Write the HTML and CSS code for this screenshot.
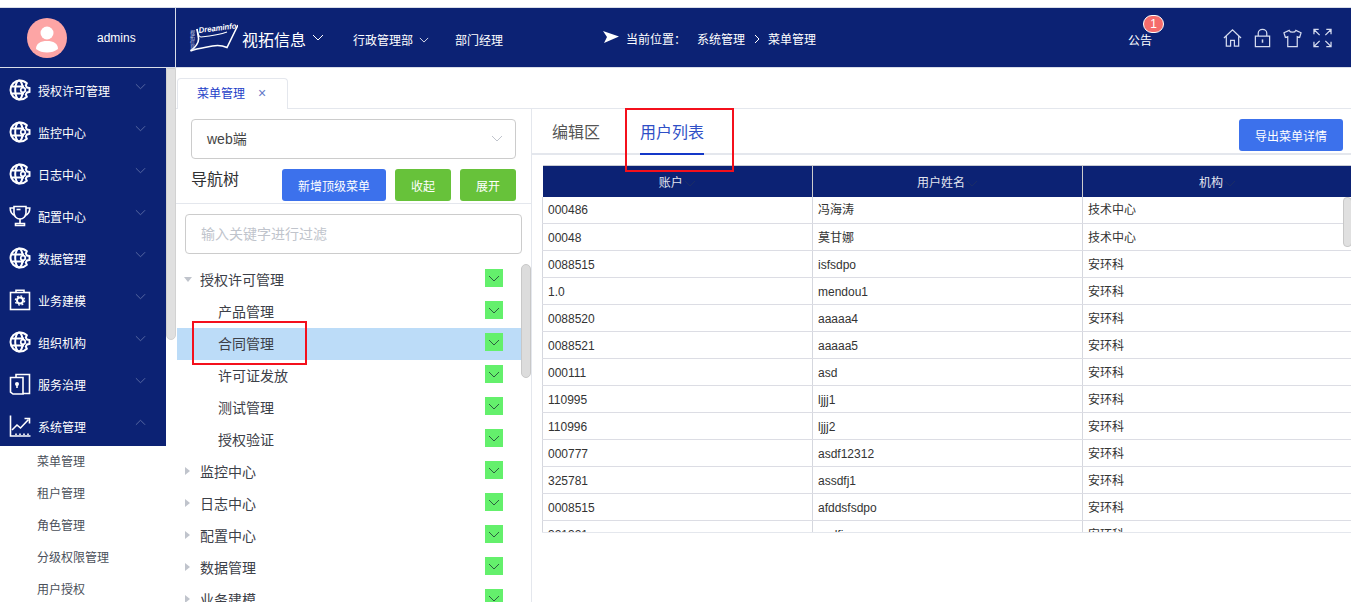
FILE: index.html
```html
<!DOCTYPE html>
<html lang="zh">
<head>
<meta charset="utf-8">
<title>菜单管理</title>
<link rel="stylesheet" href="styles.css">
</head>
<body>
<svg class="defs" width="0" height="0">
  <defs>
    <symbol id="i-globe" viewBox="0 0 22 22">
      <g fill="none" stroke="#fff" stroke-width="2">
        <path d="M11 1.500a9.500 9.500 0 0 0 0 19"/>
        <path d="M11 1.500c2.500 0 5 1 6.800 2.800l-1 2.200 1.200 2 2.500.5v4l-2.500.5-1.200 2 1 2.200a9.500 9.500 0 0 1-6.800 2.800"/>
        <ellipse cx="10" cy="11" rx="3.800" ry="9.500"/>
        <path d="M2 7.500h13M2 14.500h13"/>
      </g>
      <circle cx="14" cy="11" r="2.300" fill="#0c2274" stroke="#fff" stroke-width="1.700"/>
    </symbol>
    <symbol id="i-trophy" viewBox="0 0 22 22">
      <g fill="none" stroke="#fff" stroke-width="1.600">
        <path d="M5 1.500h12v6.500a6 6 0 0 1-12 0z"/>
        <path d="M5 3H1.200c0 4 1.300 6.500 5 7.500M17 3h3.800c0 4-1.300 6.500-5 7.500"/>
        <path d="M11 14v4.500M6.500 20.500h9v-2h-9z"/>
        <path d="M7.500 4.500h4"/>
      </g>
    </symbol>
    <symbol id="i-case" viewBox="0 0 22 22">
      <g fill="none" stroke="#fff" stroke-width="1.600">
        <rect x="1.500" y="3.500" width="19" height="17"/>
        <path d="M7 3.500V1.200h8v2.300"/>
      </g>
      <circle cx="11" cy="11.500" r="3" fill="none" stroke="#fff" stroke-width="2"/>
      <circle cx="11" cy="11.500" r="4.600" fill="none" stroke="#fff" stroke-width="1.400" stroke-dasharray="1.800 1.800"/>
    </symbol>
    <symbol id="i-cards" viewBox="0 0 22 22">
      <g fill="none" stroke="#fff" stroke-width="1.600">
        <path d="M7 4.500V1.500h13.500v19H14"/>
        <path d="M1.500 4.500H14v16.500H4l-2.500-2z"/>
      </g>
      <circle cx="8" cy="11" r="2" fill="#fff"/>
      <path d="M7.200 12h1.600v3H7.200z" fill="#fff"/>
    </symbol>
    <symbol id="i-chart" viewBox="0 0 22 22">
      <g fill="none" stroke="#fff" stroke-width="1.600">
        <path d="M1.500 0.500v20.500h20M7 20v-1.500M11 20v-1.500M15 20v-1.500M19 20v-1.500"/>
        <path d="M3 15l5-5 3.500 3L19.500 4.500"/>
        <path d="M15.500 3.500h5v5"/>
      </g>
    </symbol>
    <symbol id="i-down" viewBox="0 0 12 7">
      <path d="M1 1l5 5 5-5" fill="none" stroke="currentColor" stroke-width="1"/>
    </symbol>
  </defs>
</svg>

<div class="topline"></div>
<header class="header">
  <div class="user">
    <svg class="avatar" viewBox="0 0 40 40">
      <circle cx="20" cy="20" r="20" fill="#fda5a5"/>
      <circle cx="20" cy="15" r="6.500" fill="#fff"/>
      <path d="M9 31c0-5.500 4.500-8 11-8s11 2.500 11 8c-3 2.500-7 3.500-11 3.500S12 33.500 9 31z" fill="#fff"/>
    </svg>
    <span class="user-name">admins</span>
  </div>
  <div class="brand">
    <svg class="logo" viewBox="0 0 50 34">
      <path d="M9 9l1.500 9c.5 4-1.500 8-8 13 7-3 15-3.500 22-5 5-1 10-.5 14.500 1.500L50 5" fill="none" stroke="#fff" stroke-width="1.600"/>
      <path d="M9 9c1 6 2 8 4 8 9-1 18-2 26-5" fill="none" stroke="#fff" stroke-width="1.200"/>
      <text class="logo-text" x="11" y="13" textLength="38" lengthAdjust="spacingAndGlyphs" transform="rotate(-7 11 13)">Dreaminfo</text>
      <text class="logo-side" x="4" y="10">视拓信息</text>
    </svg>
    <span class="brand-name">视拓信息</span>
    <svg class="chev-brand"><use href="#i-down"/></svg>
  </div>
  <nav class="org">
    <span>行政管理部</span>
    <svg class="chev-org"><use href="#i-down"/></svg>
    <span class="org-role">部门经理</span>
  </nav>
  <div class="crumbs">
    <svg class="plane" viewBox="0 0 16 12"><path d="M0 0l16 5.500L1 12l3-6z" fill="#fff"/></svg>
    <span class="crumb-label">当前位置：</span>
    <span>系统管理</span>
    <svg class="crumb-sep" viewBox="0 0 6 10"><path d="M1 1l4 4-4 4" fill="none" stroke="#fff"/></svg>
    <span>菜单管理</span>
  </div>
  <div class="notice">公告<span class="badge">1</span></div>
  <div class="tools">
    <svg class="tool" viewBox="0 0 20 20"><path d="M1 10L10 1.500 19 10M3.500 8v10.500h4.500v-6h4v6h4.500V8" fill="none" stroke="#d5dbef" stroke-width="1.300"/></svg>
    <svg class="tool" viewBox="0 0 20 20"><path d="M5.500 8V5a4.500 4 0 0 1 9 0v3M2.500 8h15v11h-15z" fill="none" stroke="#d5dbef" stroke-width="1.300"/><path d="M9.200 11.500h1.600v3.500H9.200z" fill="#d5dbef"/></svg>
    <svg class="tool" viewBox="0 0 20 20"><path d="M6.500 2C7.500 4.500 12.500 4.500 13.500 2L19 4.500l-1.500 5-2.500-1v10.500H5V8.500l-2.500 1L1 4.500z" fill="none" stroke="#d5dbef" stroke-width="1.300"/></svg>
    <svg class="tool" viewBox="0 0 20 20"><path d="M1 6V1h5M1 1l6 6M19 6V1h-5M19 1l-6 6M1 14v5h5M1 19l6-6M19 14v5h-5M19 19l-6-6" fill="none" stroke="#d5dbef" stroke-width="1.300"/></svg>
  </div>
</header>

<div class="main">
  <aside class="sidebar">
    <div class="side-scroll">
      <ul class="side-menu">
        <li class="side-item"><svg class="side-icon"><use href="#i-globe"/></svg><span>授权许可管理</span><svg class="side-chev"><use href="#i-down"/></svg></li>
        <li class="side-item"><svg class="side-icon"><use href="#i-globe"/></svg><span>监控中心</span><svg class="side-chev"><use href="#i-down"/></svg></li>
        <li class="side-item"><svg class="side-icon"><use href="#i-globe"/></svg><span>日志中心</span><svg class="side-chev"><use href="#i-down"/></svg></li>
        <li class="side-item"><svg class="side-icon"><use href="#i-trophy"/></svg><span>配置中心</span><svg class="side-chev"><use href="#i-down"/></svg></li>
        <li class="side-item"><svg class="side-icon"><use href="#i-globe"/></svg><span>数据管理</span><svg class="side-chev"><use href="#i-down"/></svg></li>
        <li class="side-item"><svg class="side-icon"><use href="#i-case"/></svg><span>业务建模</span><svg class="side-chev"><use href="#i-down"/></svg></li>
        <li class="side-item"><svg class="side-icon"><use href="#i-globe"/></svg><span>组织机构</span><svg class="side-chev"><use href="#i-down"/></svg></li>
        <li class="side-item"><svg class="side-icon"><use href="#i-cards"/></svg><span>服务治理</span><svg class="side-chev"><use href="#i-down"/></svg></li>
        <li class="side-item"><svg class="side-icon"><use href="#i-chart"/></svg><span>系统管理</span><svg class="side-chev side-chev-up"><use href="#i-down"/></svg></li>
      </ul>
      <ul class="side-sub">
        <li>菜单管理</li>
        <li>租户管理</li>
        <li>角色管理</li>
        <li>分级权限管理</li>
        <li>用户授权</li>
      </ul>
    </div>
    <div class="side-bar"><div class="side-thumb"></div></div>
  </aside>

  <section class="content">
    <div class="tabbar">
      <div class="tab">菜单管理<span class="tab-x">×</span></div>
    </div>
    <div class="panes">
      <div class="left">
        <div class="select"><span>web端</span><svg class="select-chev"><use href="#i-down"/></svg></div>
        <div class="tree-head">
          <span class="tree-title">导航树</span>
          <button class="btn btn-blue btn-new">新增顶级菜单</button>
          <button class="btn btn-green">收起</button>
          <button class="btn btn-green">展开</button>
        </div>
        <div class="filter">输入关键字进行过滤</div>
        <div class="tree-wrap">
          <ul class="tree">
            <li class="node"><i class="caret caret-open"></i><span>授权许可管理</span><b class="check"><svg><use href="#i-down"/></svg></b></li>
            <li class="node node-child"><span>产品管理</span><b class="check"><svg><use href="#i-down"/></svg></b></li>
            <li class="node node-child node-current"><span>合同管理</span><b class="check"><svg><use href="#i-down"/></svg></b></li>
            <li class="node node-child"><span>许可证发放</span><b class="check"><svg><use href="#i-down"/></svg></b></li>
            <li class="node node-child"><span>测试管理</span><b class="check"><svg><use href="#i-down"/></svg></b></li>
            <li class="node node-child"><span>授权验证</span><b class="check"><svg><use href="#i-down"/></svg></b></li>
            <li class="node"><i class="caret"></i><span>监控中心</span><b class="check"><svg><use href="#i-down"/></svg></b></li>
            <li class="node"><i class="caret"></i><span>日志中心</span><b class="check"><svg><use href="#i-down"/></svg></b></li>
            <li class="node"><i class="caret"></i><span>配置中心</span><b class="check"><svg><use href="#i-down"/></svg></b></li>
            <li class="node"><i class="caret"></i><span>数据管理</span><b class="check"><svg><use href="#i-down"/></svg></b></li>
            <li class="node"><i class="caret"></i><span>业务建模</span><b class="check"><svg><use href="#i-down"/></svg></b></li>
          </ul>
          <div class="tree-thumb"></div>
        </div>
      </div>
      <div class="right">
        <div class="right-head">
          <div class="rtab">编辑区</div>
          <div class="rtab rtab-active">用户列表</div>
          <button class="btn btn-blue btn-export">导出菜单详情</button>
        </div>
        <div class="table-wrap">
          <table class="table">
            <thead>
              <tr>
                <th>账户<svg class="th-chev"><use href="#i-down"/></svg></th>
                <th>用户姓名<svg class="th-chev"><use href="#i-down"/></svg></th>
                <th>机构<svg class="th-chev"><use href="#i-down"/></svg></th>
              </tr>
            </thead>
            <tbody>
              <tr><td>000486</td><td>冯海涛</td><td>技术中心</td></tr>
              <tr><td>00048</td><td>莫甘娜</td><td>技术中心</td></tr>
              <tr><td>0088515</td><td>isfsdpo</td><td>安环科</td></tr>
              <tr><td>1.0</td><td>mendou1</td><td>安环科</td></tr>
              <tr><td>0088520</td><td>aaaaa4</td><td>安环科</td></tr>
              <tr><td>0088521</td><td>aaaaa5</td><td>安环科</td></tr>
              <tr><td>000111</td><td>asd</td><td>安环科</td></tr>
              <tr><td>110995</td><td>ljjj1</td><td>安环科</td></tr>
              <tr><td>110996</td><td>ljjj2</td><td>安环科</td></tr>
              <tr><td>000777</td><td>asdf12312</td><td>安环科</td></tr>
              <tr><td>325781</td><td>assdfj1</td><td>安环科</td></tr>
              <tr><td>0008515</td><td>afddsfsdpo</td><td>安环科</td></tr>
              <tr><td>321321</td><td>asdfj</td><td>安环科</td></tr>
            </tbody>
          </table>
          <div class="table-thumb"></div>
        </div>
      </div>
    </div>
  </section>
</div>
<div class="redbox redbox-tab"></div>
<div class="redbox redbox-node"></div>
</body>
</html>
```
FILE: styles.css
```css
* { box-sizing: border-box; }
html, body { margin: 0; padding: 0; height: 602px; overflow: hidden; background: #fff; }
body {
  position: relative;
  font-family: "Liberation Sans", "Noto Sans CJK SC", sans-serif;
  font-size: 12px;
  color: #303133;
}
ul { list-style: none; margin: 0; padding: 0; }
button { font-family: inherit; border: 0; padding: 0; }
.defs { position: absolute; }

.topline { height: 8px; border-bottom: 1px solid #d9dde8; }
.header {
  height: 60px;
  background: #0c2274;
  border-bottom: 1px solid #d9dde8;
  display: flex;
  align-items: center;
  color: #fff;
}
.user {
  width: 176px;
  height: 100%;
  border-right: 1px solid #d9dde8;
  display: flex;
  align-items: center;
  padding-left: 27px;
}
.avatar { width: 40px; height: 40px; }
.user-name { margin-left: 30px; font-size: 12px; margin-top: 1px; }
.brand { width: 177px; display: flex; align-items: center; padding-left: 12px; }
.logo { width: 50px; height: 34px; flex: none; margin-top: -2px; }
.logo-text { font: italic bold 8px "Liberation Sans", sans-serif; fill: #fff; }
.logo-side { font-size: 5px; fill: #c9d0e8; writing-mode: vertical-rl; }
.brand-name { font-size: 16px; margin: 2px 0 0 4px; white-space: nowrap; }
.chev-brand { width: 12px; height: 7px; margin-left: 6px; color: #fff; flex: none; }
.org { display: flex; align-items: center; width: 250px; margin-top: 4px; }
.chev-org { width: 10px; height: 6px; margin-left: 6px; color: #fff; }
.org-role { margin-left: 26px; }
.crumbs { display: flex; align-items: center; width: 525px; margin-top: 2px; }
.plane { width: 16px; height: 12px; margin-top: -3px; }
.crumb-label { margin-left: 7px; width: 71px; }
.crumb-sep { width: 6px; height: 10px; margin: 0 8px 0 9px; }
.notice { position: relative; width: 95px; margin-top: 4px; }
.badge {
  position: absolute;
  left: 15px;
  top: -16px;
  width: 21px;
  height: 18px;
  background: #f56c6c;
  border: 1px solid #fff;
  border-radius: 10px;
  font-size: 12px;
  line-height: 16px;
  text-align: center;
}
.tools { display: flex; gap: 11px; }
.tool { width: 19px; height: 20px; }

.main { display: flex; height: 534px; }
.sidebar { width: 176px; display: flex; flex: none; height: 534px; overflow: hidden; }
.side-scroll { width: 166px; }
.side-menu { background: #0c2274; padding-top: 1px; height: 378px; }
.side-item {
  height: 42px;
  display: flex;
  align-items: center;
  color: #fff;
  padding-left: 9px;
  position: relative;
}
.side-icon { width: 22px; height: 22px; flex: none; margin-right: 7px; }
.side-chev { width: 11px; height: 7px; color: #5d6da5; position: absolute; left: 135px; top: 14px; }
.side-chev-up { transform: rotate(180deg); }
.side-sub li { height: 32px; line-height: 32px; padding-left: 37px; color: #4a4f5a; }
.side-bar { width: 10px; background: #fff; }
.side-thumb { height: 272px; width: 10px; background: #e0e0e0; border: 1px solid #d2d2d2; border-radius: 0 0 5px 5px; }

.content { flex: 1; min-width: 0; display: flex; flex-direction: column; }
.tabbar { height: 41px; padding-top: 10px; padding-left: 1px; border-bottom: 1px solid #e4e7ed; }
.tab {
  width: 111px;
  height: 31px;
  border: 1px solid #e4e7ed;
  border-bottom: 0;
  border-radius: 4px 4px 0 0;
  background: #fff;
  color: #1e40c8;
  line-height: 29px;
  padding-left: 19px;
}
.tab-x { margin-left: 13px; color: #6478c8; font-size: 14px; }
.panes { display: flex; flex: 1; min-height: 0; }

.left { width: 356px; border-right: 1px solid #e4e7ed; flex: none; overflow: hidden; }
.select {
  margin: 10px 0 0 15px;
  width: 325px;
  height: 40px;
  border: 1px solid #ccc;
  border-radius: 4px;
  display: flex;
  align-items: center;
  justify-content: space-between;
  padding: 0 12px 2px 15px;
  font-size: 14px;
  color: #444;
}
.select-chev { width: 12px; height: 7px; color: #c0c4cc; }
.tree-head {
  height: 35px;
  margin-top: 10px;
  padding: 0 15px;
  display: flex;
  align-items: flex-start;
  gap: 9px;
  border-bottom: 1px solid #e4e7ed;
}
.tree-title { font-size: 16px; color: #303133; width: 82px; line-height: 22px; }
.btn { height: 32px; border-radius: 3px; color: #fff; font-size: 12px; cursor: pointer; }
.btn-blue { background: #3c71ec; }
.btn-green { background: #67c23a; width: 56px; }
.btn-new { width: 104px; }
.filter {
  margin: 10px 0 0 9px;
  width: 337px;
  height: 40px;
  border: 1px solid #ccc;
  border-radius: 4px;
  color: #c0c4cc;
  line-height: 38px;
  padding-left: 15px;
  font-size: 14px;
}
.tree-wrap { position: relative; margin-top: 10px; height: 338px; overflow: hidden; }
.tree { padding: 0 0 0 1px; width: 346px; }
.node {
  height: 32px;
  display: flex;
  align-items: center;
  padding-left: 8px;
  padding-bottom: 2px;
  position: relative;
  font-size: 14px;
  color: #3c4048;
}
.node-child { padding-left: 41px; }
.node-current { background: #bcdcf8; }
.caret {
  width: 0; height: 0;
  border-style: solid;
  border-width: 4px 0 4px 5px;
  border-color: transparent transparent transparent #c0c4cc;
  margin-right: 10px;
}
.caret-open { border-width: 5px 4px 0 4px; border-color: #c0c4cc transparent transparent transparent; margin-right: 8px; margin-left: -1px; }
.check {
  position: absolute;
  left: 308px;
  top: 5px;
  width: 18px;
  height: 18px;
  background: #64f06c;
  display: flex;
  align-items: center;
  justify-content: center;
  color: #2c5f40;
}
.check svg { width: 12px; height: 7px; }
.tree-thumb {
  position: absolute;
  left: 345px;
  top: 0;
  width: 10px;
  height: 114px;
  background: #dcdcdc;
  border: 1px solid #c8c8c8;
  border-radius: 5px;
}

.right { flex: 1; min-width: 0; }
.right-head {
  height: 46px;
  display: flex;
  border-bottom: 2px solid #e4e7ed;
  padding-left: 20px;
  position: relative;
}
.rtab {
  font-size: 16px;
  color: #555;
  line-height: 48px;
  height: 46px;
  margin-right: 40px;
}
.rtab-active { color: #2f4fc6; border-bottom: 2px solid #1438c8; }
.btn-export { position: absolute; left: 707px; top: 10px; width: 104px; }
.table-wrap {
  position: relative;
  margin: 10px 0 0 10px;
  height: 368px;
  overflow: hidden;
  border-bottom: 1px solid #e4e7ed;
}
.table { width: 811px; border-collapse: collapse; table-layout: fixed; font-size: 12px; border-top: 1px solid #c9ccd4; color: #333; }
.table th {
  background: #0c2274;
  height: 31px;
  color: #e2e5f0;
  font-weight: 400;
  border-right: 1px solid #ccc;
  padding: 0;
}
.table td {
  height: 27px;
  line-height: 14px;
  padding: 1px 0 0 5px;
  border-right: 1px solid #d5d7de;
  border-bottom: 1px solid #dcdde4;
}
.table td:first-child { border-left: 1px solid #d5d7de; }
.th-chev { width: 12px; height: 7px; color: #1a2c66; margin-left: 1px; }
.table-thumb {
  position: absolute;
  left: 801px;
  top: 32px;
  width: 9px;
  height: 50px;
  background: #e0e0e0;
  border: 1px solid #c8c8c8;
  border-radius: 4px;
}

.redbox { position: absolute; border: 2px solid #f4101c; pointer-events: none; }
.redbox-tab { left: 625px; top: 108px; width: 109px; height: 64px; }
.redbox-node { left: 192px; top: 321px; width: 115px; height: 44px; }
```
